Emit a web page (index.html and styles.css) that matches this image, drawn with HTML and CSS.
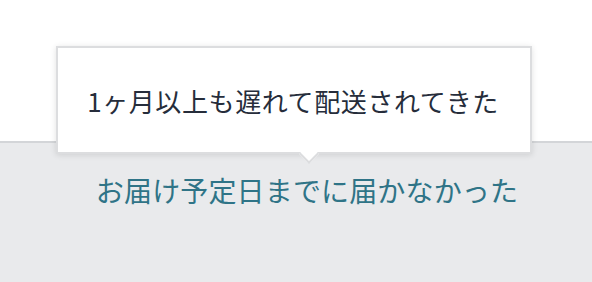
FILE: index.html
```html
<!DOCTYPE html>
<html lang="ja">
<head>
<meta charset="utf-8">
<link rel="stylesheet" href="styles.css">
</head>
<body>
<div class="page">
  <div class="top"></div>
  <div class="bottom">
    <p class="option">お届け予定日までに届かなかった</p>
  </div>
  <div class="tooltip">
    <span class="tooltip-text">1ヶ月以上も遅れて配送されてきた</span>
  </div>
</div>
</body>
</html>
```
FILE: styles.css
```css
html, body {
  margin: 0;
  padding: 0;
}
body {
  font-family: "Noto Sans CJK JP", "Noto Sans", sans-serif;
  background: #e9eaec;
}
.page {
  position: relative;
  width: 592px;
  height: 282px;
  overflow: hidden;
}
.top {
  height: 141px;
  background: #ffffff;
  border-bottom: 2px solid #d3d5d8;
}
.bottom {
  display: flex;
  justify-content: center;
  padding-top: 26px;
}
.option {
  margin: 0 0 0 22px;
  font-size: 28px;
  line-height: 42px;
  color: #2f7487;
  letter-spacing: 0.15px;
}
.tooltip {
  position: absolute;
  left: 56px;
  top: 46px;
  width: 472px;
  height: 104px;
  background: #ffffff;
  border: 2px solid #dcdddf;
  box-shadow: 0 1px 6px rgba(0, 0, 0, 0.12);
  display: flex;
  align-items: center;
  justify-content: center;
}
.tooltip::after {
  content: "";
  position: absolute;
  left: 244px;
  bottom: -9px;
  width: 12px;
  height: 12px;
  background: #ffffff;
  border-right: 2px solid #dcdddf;
  border-bottom: 2px solid #dcdddf;
  transform: rotate(45deg);
}
.tooltip-text {
  font-size: 26px;
  line-height: 36px;
  color: #262d3b;
  letter-spacing: 0.6px;
  position: relative;
  top: 1px;
  left: -1px;
}
```
